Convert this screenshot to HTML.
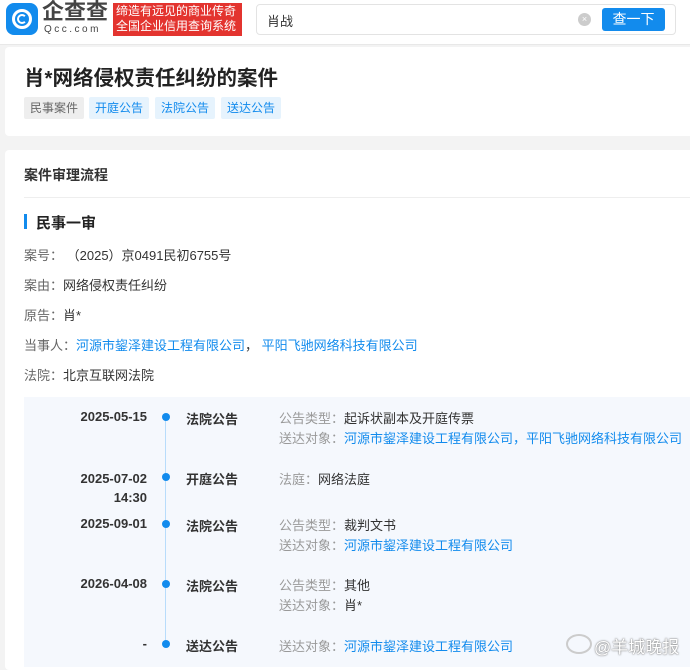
<!DOCTYPE html>
<html><head><meta charset="utf-8"><style>
*{margin:0;padding:0;box-sizing:border-box}
body{width:690px;height:663px;overflow:hidden;background:#f3f3f3;font-family:"Liberation Sans","Noto Sans CJK SC",sans-serif;font-size:13px;color:#333;position:relative}
.a{position:absolute;white-space:nowrap}
.hdr{left:0;top:0;width:690px;height:45px;background:#fff;border-bottom:1px solid #e8e8e8}
.card{background:#fff;border-radius:4px}
.tag{top:97px;height:22px;line-height:22px;padding:0 6px;font-size:12px;border-radius:2px}
.lbl{color:#666}
.blue{color:#128bed}
.d{font-weight:bold;color:#333;text-align:right;width:100px;left:47px}
.t{font-weight:bold;left:186px;color:#333}
.dot{left:162px;width:8px;height:8px;border-radius:50%;background:#128bed}
.g{color:#999}
</style></head><body>
<div class="a hdr"></div>
<div class="a" style="left:6px;top:3px;width:32px;height:32px;background:#128bed;border-radius:8px"></div>
<div class="a" style="left:12px;top:9px;width:20px;height:20px;border:3px solid #fff;border-radius:50%"></div>
<div class="a" style="left:17px;top:14px;width:10px;height:10px;border:2px solid #fff;border-radius:50%;border-right-color:transparent"></div>
<div class="a" style="left:42px;top:-2px;font-size:22px;line-height:28px;font-weight:bold;color:#444">企查查</div>
<div class="a" style="left:44px;top:24px;font-size:10px;line-height:12px;color:#444;letter-spacing:2.5px">Qcc.com</div>
<div class="a" style="left:113px;top:3px;width:129px;height:33px;background:#e3342f;color:#fff;font-size:12px;line-height:15px;padding:1px 3px">缔造有远见的商业传奇<br>全国企业信用查询系统</div>
<div class="a" style="left:256px;top:4px;width:420px;height:31px;border:1px solid #e3e3e3;border-radius:4px;background:#fff"></div>
<div class="a" style="left:267px;top:11px;font-size:13px;color:#333">肖战</div>
<div class="a" style="left:578px;top:13px;width:13px;height:13px;border-radius:50%;background:#ccc;color:#fff;font-size:9px;line-height:13px;text-align:center">×</div>
<div class="a" style="left:602px;top:8px;width:63px;height:23px;background:#128bed;border-radius:3px;color:#fff;font-size:14px;line-height:23px;text-align:center">查一下</div>

<div class="a card" style="left:5px;top:47px;width:700px;height:89px"></div>
<div class="a" style="left:24px;top:61px;font-size:20.5px;font-weight:bold;color:#222">肖*网络侵权责任纠纷的案件</div>
<div class="a tag" style="left:24px;background:#eee;color:#666">民事案件</div>
<div class="a tag" style="left:89px;background:#e6f3fd;color:#128bed">开庭公告</div>
<div class="a tag" style="left:155px;background:#e6f3fd;color:#128bed">法院公告</div>
<div class="a tag" style="left:221px;background:#e6f3fd;color:#128bed">送达公告</div>

<div class="a card" style="left:5px;top:150px;width:700px;height:520px"></div>
<div class="a" style="left:24px;top:165px;font-size:14px;font-weight:bold;color:#333">案件审理流程</div>
<div class="a" style="left:24px;top:197px;width:680px;height:1px;background:#eee"></div>
<div class="a" style="left:24px;top:214px;width:3px;height:15px;background:#128bed"></div>
<div class="a" style="left:36px;top:212px;font-size:15px;font-weight:bold;color:#222">民事一审</div>
<div class="a" style="left:24px;top:245px"><span class="lbl">案号：</span>&nbsp;（2025）京0491民初6755号</div>
<div class="a" style="left:24px;top:275px"><span class="lbl">案由：</span>网络侵权责任纠纷</div>
<div class="a" style="left:24px;top:305px"><span class="lbl">原告：</span>肖*</div>
<div class="a" style="left:24px;top:335px"><span class="lbl">当事人：</span><span class="blue">河源市鋆泽建设工程有限公司</span>，&nbsp;<span class="blue">平阳飞驰网络科技有限公司</span></div>
<div class="a" style="left:24px;top:365px"><span class="lbl">法院：</span>北京互联网法院</div>

<div class="a" style="left:24px;top:397px;width:680px;height:270px;background:#f5f8fd"></div>
<div class="a" style="left:165px;top:417px;width:1px;height:230px;background:#b8dcfb"></div>

<div class="a d" style="top:409px">2025-05-15</div>
<div class="a dot" style="top:413px"></div>
<div class="a t" style="top:409px">法院公告</div>
<div class="a" style="left:279px;top:409px;line-height:20px"><span class="g">公告类型：</span>起诉状副本及开庭传票<br><span class="g">送达对象：</span><span class="blue">河源市鋆泽建设工程有限公司，平阳飞驰网络科技有限公司</span></div>

<div class="a d" style="top:469px;line-height:19px">2025-07-02<br>14:30</div>
<div class="a dot" style="top:473px"></div>
<div class="a t" style="top:469px">开庭公告</div>
<div class="a" style="left:279px;top:469px"><span class="g">法庭：</span>网络法庭</div>

<div class="a d" style="top:516px">2025-09-01</div>
<div class="a dot" style="top:520px"></div>
<div class="a t" style="top:516px">法院公告</div>
<div class="a" style="left:279px;top:516px;line-height:20px"><span class="g">公告类型：</span>裁判文书<br><span class="g">送达对象：</span><span class="blue">河源市鋆泽建设工程有限公司</span></div>

<div class="a d" style="top:576px">2026-04-08</div>
<div class="a dot" style="top:580px"></div>
<div class="a t" style="top:576px">法院公告</div>
<div class="a" style="left:279px;top:576px;line-height:20px"><span class="g">公告类型：</span>其他<br><span class="g">送达对象：</span>肖*</div>

<div class="a d" style="top:636px">-</div>
<div class="a dot" style="top:640px"></div>
<div class="a t" style="top:636px">送达公告</div>
<div class="a" style="left:279px;top:636px"><span class="g">送达对象：</span><span class="blue">河源市鋆泽建设工程有限公司</span></div>

<div class="a" style="left:566px;top:634px;width:26px;height:20px;border:2px solid #ccc;border-radius:50%"></div>
<div class="a" style="left:594px;top:633px;font-size:17px;color:#fff;text-shadow:0 0 2px #888,0 0 1px #666">@羊城晚报</div>
</body></html>
